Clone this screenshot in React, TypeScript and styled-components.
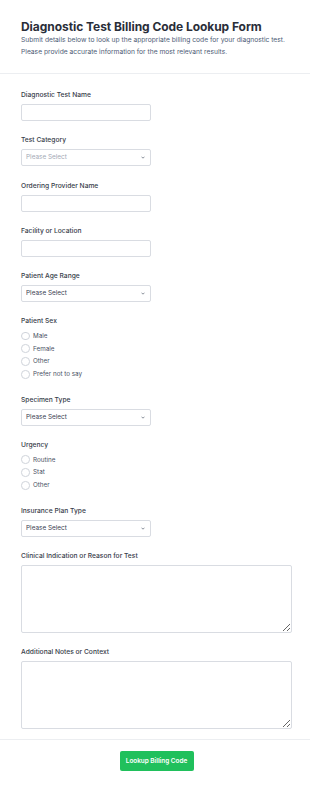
import React from "react";
import styled, { createGlobalStyle } from "styled-components";

const Global = createGlobalStyle`
  html, body { margin: 0; padding: 0; background: #ffffff; }
  body { font-family: Inter, "Noto Sans", sans-serif; -webkit-font-smoothing: antialiased; }
  * { box-sizing: border-box; }
`;

const Page = styled.div`
  width: 310px;
  min-height: 787px;
  background: #fff;
  display: flex;
  flex-direction: column;
`;

const Header = styled.header`
  padding: 20px 18px 15px 21px;
  border-bottom: 1px solid #eceef1;
`;

const Title = styled.h1`
  margin: 0;
  font-size: 12px;
  line-height: 14px;
  font-weight: 700;
  color: #2a2e39;
  letter-spacing: -0.05px;
  white-space: nowrap;
`;

const Subtitle = styled.p`
  margin: 0;
  font-size: 6.7px;
  line-height: 12px;
  color: #4d5b75;
  white-space: nowrap;
`;

const Form = styled.form`
  padding: 16px 18px 10px 21px;
  display: flex;
  flex-direction: column;
  gap: 14.3px;
`;

const Field = styled.div`
  display: flex;
  flex-direction: column;
  gap: 4px;
`;

const Label = styled.label`
  display: block;
  font-size: 6.7px;
  line-height: 10px;
  height: 10px;
  font-weight: 500;
  color: #373d4a;
  white-space: nowrap;
`;

const TextInput = styled.input`
  display: block;
  width: 130px;
  height: 17px;
  margin: 0;
  border: 1px solid #d9dce2;
  border-radius: 2px;
  background: #fff;
  padding: 0 4px;
  font-family: inherit;
  font-size: 6.4px;
  outline: none;
`;

const SelectWrap = styled.div`
  position: relative;
  width: 130px;
  height: 17px;
`;

const Select = styled.select<{ $placeholder?: boolean }>`
  appearance: none;
  -webkit-appearance: none;
  display: block;
  margin: 0;
  width: 100%;
  height: 17px;
  border: 1px solid #d9dce2;
  border-radius: 2px;
  background: #fff;
  padding: 0 0 0 4px;
  font-family: inherit;
  font-size: 6.4px;
  line-height: 15px;
  color: ${(p) => (p.$placeholder ? "#a3a9b5" : "#3a4150")};
  outline: none;
`;

const Chevron = styled.svg`
  position: absolute;
  right: 6.5px;
  top: 7px;
  width: 4px;
  height: 3px;
  pointer-events: none;
`;

const RadioGroup = styled.div`
  display: flex;
  flex-direction: column;
  margin-top: -1px;
`;

const RadioRow = styled.label`
  display: flex;
  align-items: center;
  gap: 3.5px;
  height: 12.8px;
  font-size: 6.3px;
  color: #4a5265;
  white-space: nowrap;
`;

const Radio = styled.input`
  appearance: none;
  -webkit-appearance: none;
  margin: 0;
  width: 8.5px;
  height: 8.5px;
  border: 1px solid #cfd3da;
  border-radius: 50%;
  background: #fff;
  flex: none;
`;

const TextArea = styled.textarea`
  display: block;
  margin: 0;
  width: 271px;
  height: 67.5px;
  border: 1px solid #d9dce2;
  border-radius: 2px;
  background: #fff;
  font-family: inherit;
  font-size: 6.4px;
  outline: none;
`;

const Footer = styled.div`
  border-top: 1px solid #eceef1;
  padding: 11px 18px 16px 21px;
  display: flex;
  justify-content: center;
`;

const Button = styled.button`
  width: 74px;
  height: 20px;
  border: none;
  border-radius: 2px;
  background: #20c05c;
  color: #fff;
  font-family: inherit;
  font-size: 6.4px;
  font-weight: 600;
  padding: 0;
`;

const ChevronIcon = () => (
  <Chevron viewBox="0 0 4 3">
    <polyline points="0.5,0.7 2,2.2 3.5,0.7" fill="none" stroke="#6b7280" strokeWidth="0.8" />
  </Chevron>
);

const SelectField = ({ label, placeholder }: { label: string; placeholder?: boolean }) => (
  <Field>
    <Label>{label}</Label>
    <SelectWrap>
      <Select $placeholder={placeholder} defaultValue="">
        <option value="">Please Select</option>
      </Select>
      <ChevronIcon />
    </SelectWrap>
  </Field>
);

const InputField = ({ label }: { label: string }) => (
  <Field>
    <Label>{label}</Label>
    <TextInput type="text" />
  </Field>
);

const RadioField = ({ label, name, options }: { label: string; name: string; options: string[] }) => (
  <Field>
    <Label>{label}</Label>
    <RadioGroup>
      {options.map((o) => (
        <RadioRow key={o}>
          <Radio type="radio" name={name} />
          {o}
        </RadioRow>
      ))}
    </RadioGroup>
  </Field>
);

const AreaField = ({ label }: { label: string }) => (
  <Field>
    <Label>{label}</Label>
    <TextArea />
  </Field>
);

export default function App() {
  return (
    <Page>
      <Global />
      <Header>
        <Title>Diagnostic Test Billing Code Lookup Form</Title>
        <Subtitle>
          Submit details below to look up the appropriate billing code for your diagnostic test.
          <br />
          Please provide accurate information for the most relevant results.
        </Subtitle>
      </Header>
      <Form onSubmit={(e) => e.preventDefault()}>
        <InputField label="Diagnostic Test Name" />
        <SelectField label="Test Category" placeholder />
        <InputField label="Ordering Provider Name" />
        <InputField label="Facility or Location" />
        <SelectField label="Patient Age Range" />
        <RadioField label="Patient Sex" name="sex" options={["Male", "Female", "Other", "Prefer not to say"]} />
        <SelectField label="Specimen Type" />
        <RadioField label="Urgency" name="urgency" options={["Routine", "Stat", "Other"]} />
        <SelectField label="Insurance Plan Type" />
        <AreaField label="Clinical Indication or Reason for Test" />
        <AreaField label="Additional Notes or Context" />
      </Form>
      <Footer>
        <Button type="button">Lookup Billing Code</Button>
      </Footer>
    </Page>
  );
}
